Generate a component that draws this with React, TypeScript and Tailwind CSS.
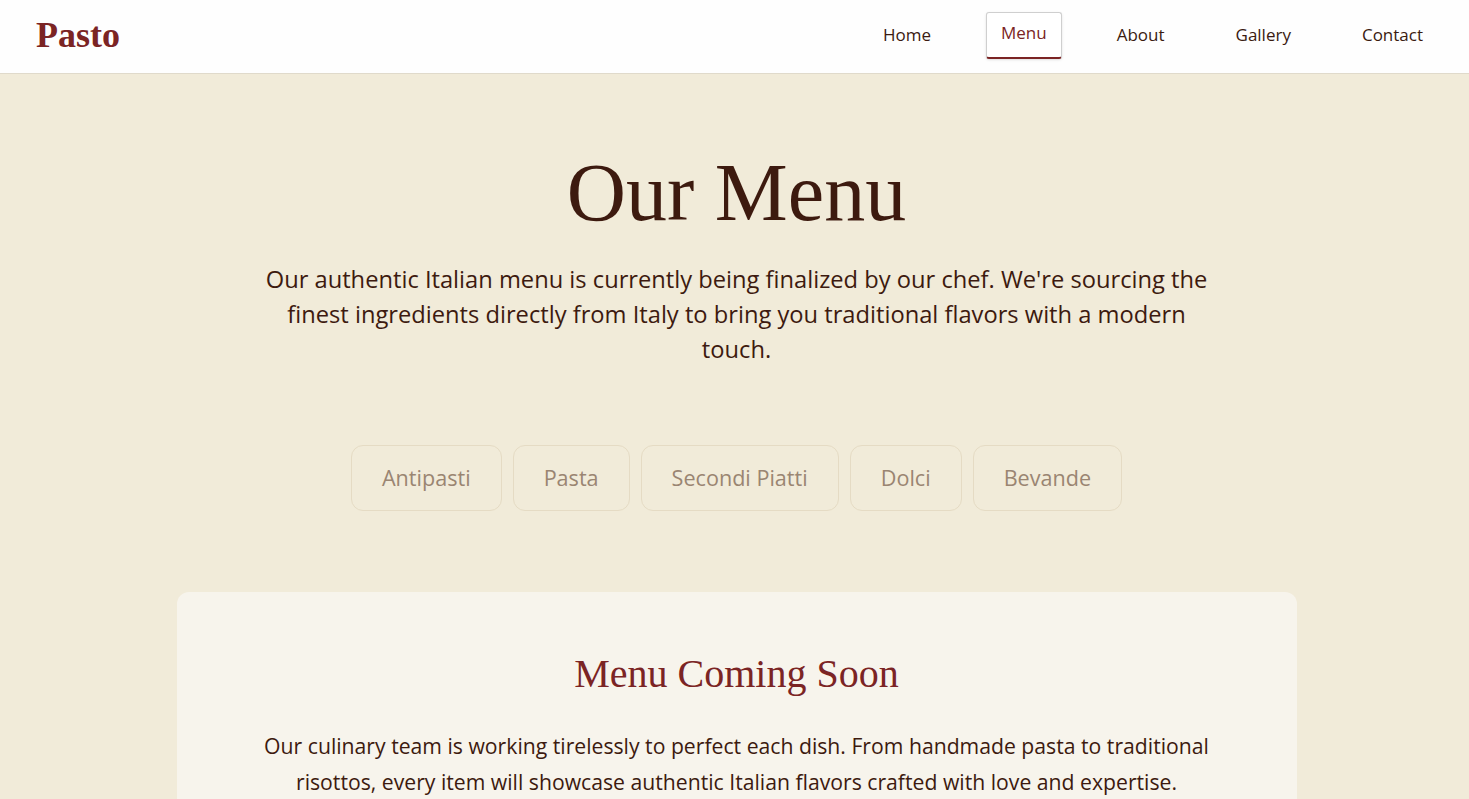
import React from "react";

const navItems = ["Home", "Menu", "About", "Gallery", "Contact"];
const categories = ["Antipasti", "Pasta", "Secondi Piatti", "Dolci", "Bevande"];

const serif = "font-['Liberation_Serif',Georgia,serif]";
const sans = "font-['Open_Sans','Noto_Sans',sans-serif]";

function Header() {
  return (
    <header className="flex h-[74px] items-center justify-between border-b border-[#e0dacb] bg-[#fefefe] pl-9 pr-[30px]">
      <a className={`${serif} -mt-1 text-[36px] font-bold text-[#7b2424]`}>Pasto</a>
      <nav className={`${sans} -mt-[3px] flex items-center gap-[39px]`}>
        {navItems.map((item) =>
          item === "Menu" ? (
            <a
              key={item}
              className="flex h-[47px] items-center rounded-[3px] border border-[#cfcfcf] border-b-2 border-b-[#7b2424] bg-white px-[14px] pb-[3px] text-[17px] text-[#7b2424] shadow-sm"
            >
              {item}
            </a>
          ) : (
            <a key={item} className="px-4 text-[17px] text-[#3a1a10]">
              {item}
            </a>
          )
        )}
      </nav>
    </header>
  );
}

export default function App() {
  return (
    <div className="min-h-screen bg-[#f1ebd9]">
      <Header />
      <main className="flex flex-col items-center pt-[78px] pl-[28px] pr-6">
        <h1 className={`${serif} text-[82px] leading-none text-[#3d1a0f]`}>Our Menu</h1>
        <p
          className={`${sans} mt-7 max-w-[952px] text-center text-[23.7px] leading-[35px] text-[#3d1a0f]`}
        >
          Our authentic Italian menu is currently being finalized by our chef. We're sourcing the
          finest ingredients directly from Italy to bring you traditional flavors with a modern
          touch.
        </p>

        <div className={`${sans} mt-[78px] flex gap-[11px]`}>
          {categories.map((c) => (
            <button
              key={c}
              className="h-[66px] rounded-xl border border-[#e5dbc4] bg-[#f1ebd9] px-[30px] text-[21.6px] font-medium text-[#9a8572]"
            >
              {c}
            </button>
          ))}
        </div>

        <section className="mt-[81px] w-[1120px] rounded-xl bg-[#f7f4ec] px-16 pt-[60px] pb-16 text-center">
          <h2 className={`${serif} text-[40px] leading-[44px] text-[#7b2424]`}>Menu Coming Soon</h2>
          <p
            className={`${sans} mx-auto mt-8 max-w-[960px] text-[21.2px] leading-[36px] text-[#3d1a0f]`}
          >
            Our culinary team is working tirelessly to perfect each dish. From handmade pasta to
            traditional risottos, every item will showcase authentic Italian flavors crafted with
            love and expertise.
          </p>
        </section>
      </main>
    </div>
  );
}
